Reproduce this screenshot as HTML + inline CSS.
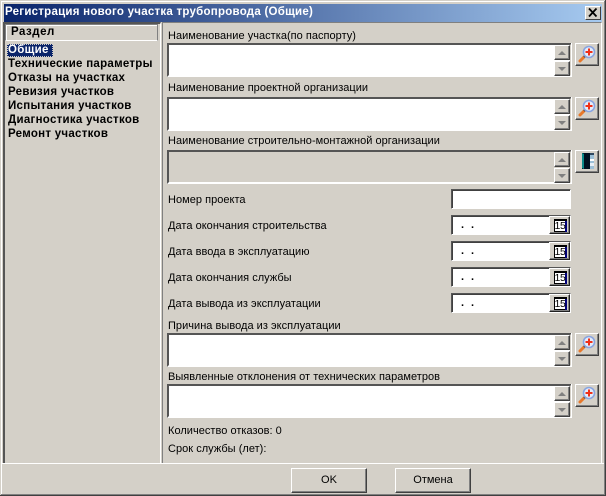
<!DOCTYPE html>
<html><head><meta charset="utf-8"><style>
html,body{margin:0;padding:0;width:606px;height:496px;overflow:hidden;background:#d4d0c8}
div{position:absolute;box-sizing:border-box}
.t{font:11px/14px "Liberation Sans",sans-serif;color:#000;white-space:nowrap;letter-spacing:.03px;margin-top:1px}
.b{font:bold 11.5px/14px "Liberation Sans",sans-serif;color:#000;white-space:nowrap;left:8px;letter-spacing:.28px}
.e{left:167px;width:405px;height:34px;background:#fff;border:2px solid;border-color:#555 #d4d0c8 #fff #555}
.e:after{content:"";position:absolute;right:-2px;top:-2px;bottom:-2px;width:1px;background:#fff}
.sc{left:554px;width:16px;height:15px;background:#d4d0c8;border:1px solid;border-color:#fff #404040 #404040 #fff;box-shadow:inset -1px -1px 0 #808080}
.sc:after{content:"";position:absolute;left:3px;width:0;height:0;border-left:4px solid transparent;border-right:4px solid transparent}
.u:after{top:5px;border-bottom:4px solid #808080}
.d:after{top:5px;border-top:4px solid #808080}
.g{left:575px;width:24px;height:23px;background:#d4d0c8;border:1px solid;border-color:#fff #404040 #404040 #fff;box-shadow:inset -1px -1px 0 #808080}
.g svg{position:absolute;left:2px;top:1px}
.i{left:451px;width:120px;height:20px;background:#fff;border:1px solid;border-color:#555 #fff #fff #555;box-shadow:inset 1px 1px 0 #404040}
.ca{left:549px;width:21px;height:18px;background:#d4d0c8;border:1px solid;border-color:#fff #202020 #202020 #fff;box-shadow:inset -1px -1px 0 #808080}
.ca span{position:absolute;left:4px;top:2px;width:13px;height:13px;background:#fff;box-shadow:inset 0 2px 0 #000,inset 1px 0 0 #000,inset -2px 0 0 #00007a,inset 0 -1px 0 #000;font:10.5px/14px "Liberation Sans",sans-serif;letter-spacing:-.3px;text-align:center;color:#000;padding-right:1px;box-sizing:border-box}
.dots{font:bold 11px/12px "Liberation Sans",sans-serif;left:461px;letter-spacing:7px;color:#000}
.k{top:468px;width:76px;height:25px;background:#d4d0c8;border:1px solid;border-color:#fff #404040 #404040 #fff;box-shadow:inset -1px -1px 0 #808080;text-align:center;font:11px/22px "Liberation Sans",sans-serif;color:#000}
</style></head><body>
<svg width="0" height="0" style="position:absolute"><defs>
<g id="m"><line x1="2" y1="16" x2="6" y2="12" stroke="#e8782a" stroke-width="3" stroke-linecap="round"/><line x1="6" y1="12" x2="8" y2="10" stroke="#404858" stroke-width="2"/><circle cx="11" cy="7" r="5.5" fill="#e4ecfa" stroke="#88a4e0" stroke-width="1.6"/><path d="M11 3.5v7M7.5 7h7" stroke="#f03018" stroke-width="2"/></g>
</defs></svg>

<!-- window frame -->
<div style="left:0;top:0;width:606px;height:1px;background:#d4d0c8"></div>
<div style="left:1px;top:1px;width:603px;height:1px;background:#fff"></div>
<div style="left:1px;top:1px;width:1px;height:493px;background:#fff"></div>
<div style="left:604px;top:1px;width:1px;height:494px;background:#808080"></div>
<div style="left:605px;top:0;width:1px;height:496px;background:#404040"></div>
<div style="left:0;top:495px;width:606px;height:1px;background:#404040"></div>
<div style="left:1px;top:494px;width:604px;height:1px;background:#808080"></div>

<!-- title -->
<div style="left:4px;top:4px;width:598px;height:18px;background:linear-gradient(90deg,#0a246a,#a6caf0)"></div>
<div style="left:5px;top:5px;font:bold 11.5px/15px 'Liberation Sans',sans-serif;color:#fff;letter-spacing:.25px;white-space:nowrap">Регистрация нового участка трубопровода (Общие)</div>
<div style="left:585px;top:6px;width:16px;height:14px;background:#d4d0c8;border:1px solid;border-color:#fff #404040 #404040 #fff">
<svg width="14" height="12" style="position:absolute;left:0;top:0"><path d="M3 1.5l7.5 8M10.5 1.5L3 9.5" stroke="#000" stroke-width="1.8" fill="none"/></svg></div>

<!-- left panel -->
<div style="left:3px;top:22px;width:158px;height:442px;border:2px solid;border-color:#555 #fff #fff #555;border-right-width:1px;border-bottom-width:1px"></div>
<div style="left:5px;top:24px;width:153px;height:17px;border:1px solid;border-color:#808080 #808080 #fff #808080;box-shadow:inset 1px 1px 0 #fff"></div>
<div class="b" style="left:11px;top:25px;letter-spacing:.5px">Раздел</div>
<div style="left:7px;top:44px;width:46px;height:13px;background:#0a246a;outline:1px dotted #d4d0c8;outline-offset:-1px"></div>
<div class="b" style="top:43px;color:#fff">Общие</div>
<div class="b" style="top:57px">Технические параметры</div>
<div class="b" style="top:71px">Отказы на участках</div>
<div class="b" style="top:85px">Ревизия участков</div>
<div class="b" style="top:99px">Испытания участков</div>
<div class="b" style="top:113px">Диагностика участков</div>
<div class="b" style="top:127px">Ремонт участков</div>

<!-- right panel -->
<div style="left:162px;top:22px;width:440px;height:442px;border:1px solid;border-color:#808080 #fff #fff #808080"></div>
<div style="left:2px;top:463px;width:602px;height:1px;background:#fff"></div>

<div class="t" style="left:168px;top:28px">Наименование участка(по паспорту)</div>
<div class="e" style="top:43px"></div><div class="sc u" style="top:45px"></div><div class="sc d" style="top:61px"></div>
<div class="g" style="top:43px"><svg width="20" height="20"><use href="#m"/></svg></div>

<div class="t" style="left:168px;top:80px">Наименование проектной организации</div>
<div class="e" style="top:97px"></div><div class="sc u" style="top:99px"></div><div class="sc d" style="top:115px"></div>
<div class="g" style="top:97px"><svg width="20" height="20"><use href="#m"/></svg></div>

<div class="t" style="left:168px;top:133px">Наименование строительно-монтажной организации</div>
<div class="e" style="top:150px;background:#d4d0c8"></div><div class="sc u" style="top:152px"></div><div class="sc d" style="top:168px"></div>
<div class="g" style="top:150px"><svg width="20" height="20"><rect x="4" y="1" width="8" height="16" fill="#001020"/><path d="M4 1v15l2 1V2z" fill="#0a8a8a"/><rect x="12" y="2" width="4" height="15" fill="#9cc0d8"/><rect x="12" y="1" width="4" height="2" fill="#304860"/><rect x="12" y="7" width="4" height="2" fill="#fff"/><rect x="12" y="11" width="4" height="3" fill="#e8f0f8"/></svg></div>

<div class="t" style="left:168px;top:192px">Номер проекта</div>
<div class="i" style="top:189px"></div>

<div class="t" style="left:168px;top:218px">Дата окончания строительства</div>
<div class="i" style="top:215px"></div><div class="dots" style="top:219px">..</div><div class="ca" style="top:216px"><span>15</span></div>

<div class="t" style="left:168px;top:244px">Дата ввода в эксплуатацию</div>
<div class="i" style="top:241px"></div><div class="dots" style="top:245px">..</div><div class="ca" style="top:242px"><span>15</span></div>

<div class="t" style="left:168px;top:270px">Дата окончания службы</div>
<div class="i" style="top:267px"></div><div class="dots" style="top:271px">..</div><div class="ca" style="top:268px"><span>15</span></div>

<div class="t" style="left:168px;top:296px">Дата вывода из эксплуатации</div>
<div class="i" style="top:293px"></div><div class="dots" style="top:297px">..</div><div class="ca" style="top:294px"><span>15</span></div>

<div class="t" style="left:168px;top:318px">Причина вывода из эксплуатации</div>
<div class="e" style="top:333px"></div><div class="sc u" style="top:335px"></div><div class="sc d" style="top:351px"></div>
<div class="g" style="top:333px"><svg width="20" height="20"><use href="#m"/></svg></div>

<div class="t" style="left:168px;top:369px">Выявленные отклонения от технических параметров</div>
<div class="e" style="top:384px"></div><div class="sc u" style="top:386px"></div><div class="sc d" style="top:402px"></div>
<div class="g" style="top:384px"><svg width="20" height="20"><use href="#m"/></svg></div>

<div class="t" style="left:168px;top:423px">Количество отказов: 0</div>
<div class="t" style="left:168px;top:441px">Срок службы (лет):</div>

<div class="k" style="left:291px">OK</div>
<div class="k" style="left:395px">Отмена</div>
</body></html>
